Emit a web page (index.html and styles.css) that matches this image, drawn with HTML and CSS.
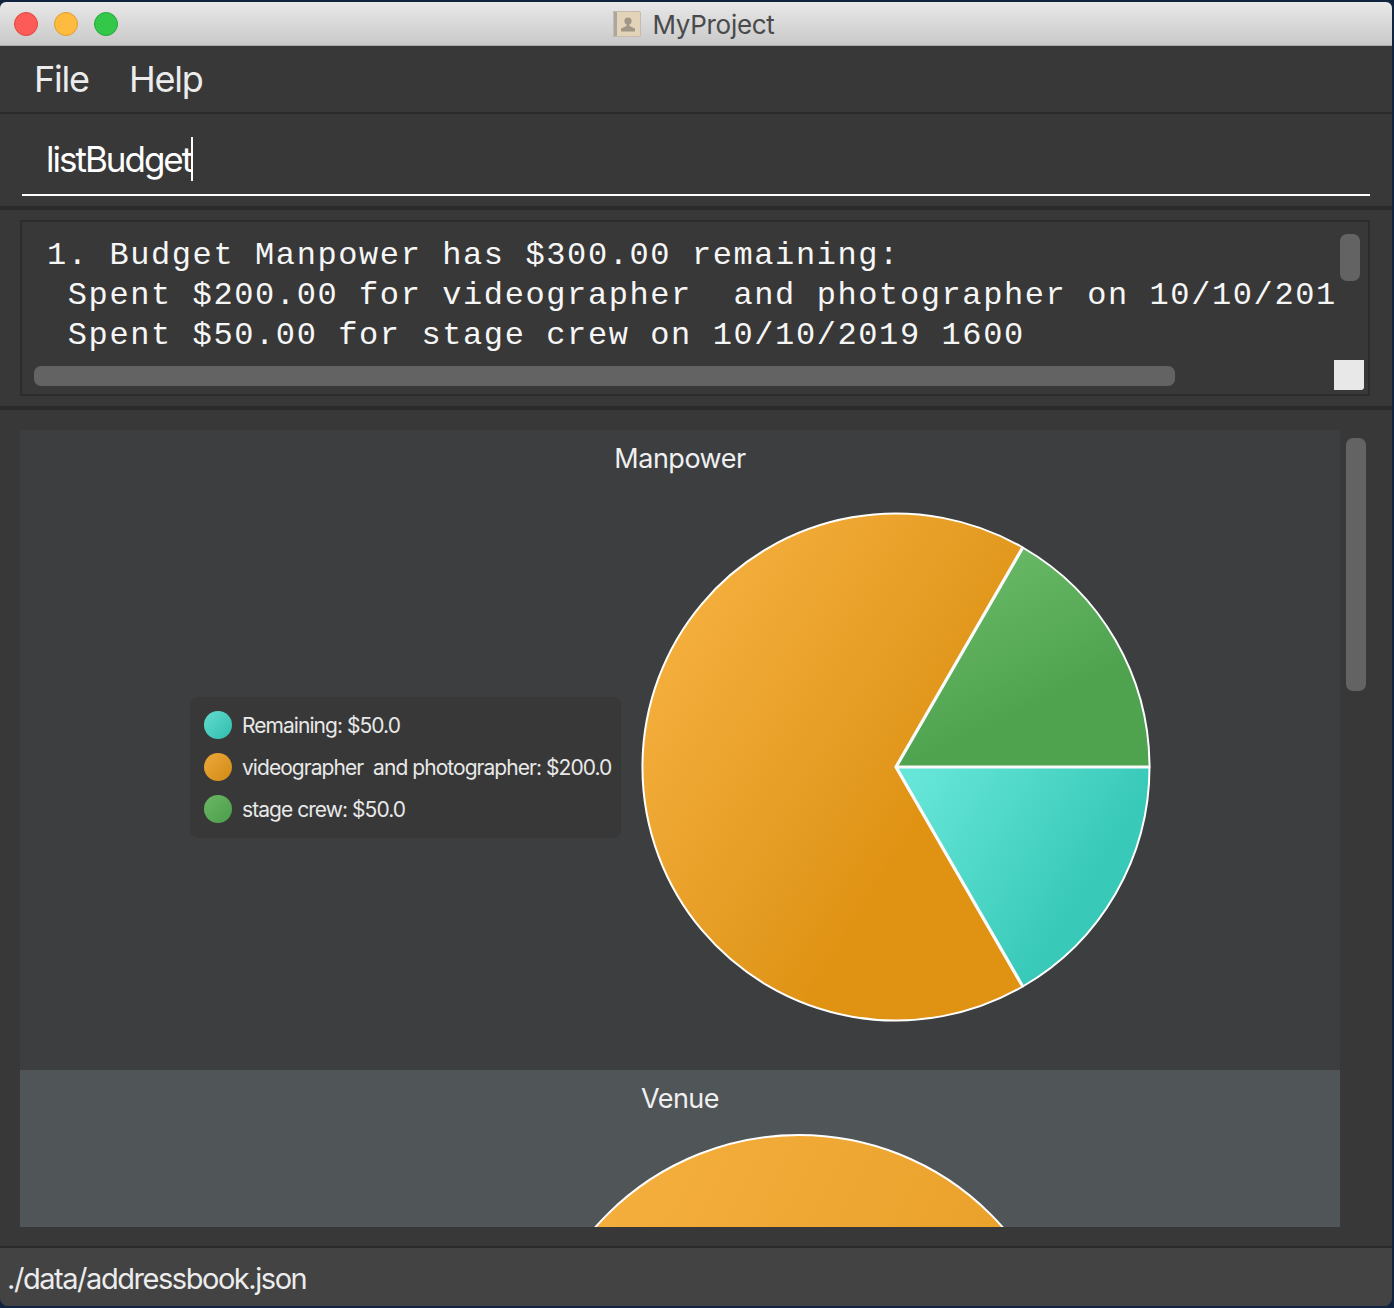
FILE: index.html
```html
<!DOCTYPE html>
<html>
<head>
  <title>MyProject</title>
  <link rel="stylesheet" href="styles.css">
</head>
<body>
  <div class="window">
    <div class="titlebar">
      <div class="lights">
        <span class="light red"></span>
        <span class="light yellow"></span>
        <span class="light green"></span>
      </div>
      <div class="title">
        <svg class="title-icon" width="28" height="26" viewBox="0 0 28 26">
          <rect x="0" y="0" width="28" height="26" rx="1.5" fill="#e3d3b8"/>
          <rect x="0" y="0" width="4" height="26" rx="1" fill="#aaa6a0"/>
          <rect x="0.5" y="0.5" width="27" height="25" rx="1.5" fill="none" stroke="#c4bcae"/>
          <circle cx="15" cy="10" r="3.6" fill="#a09786"/>
          <path d="M13.5 13 L16.5 13 L16.5 15 L22 17.5 L22 20.5 L8 20.5 L8 17.5 L13.5 15 Z" fill="#a09786"/>
        </svg>
        <span>MyProject</span>
      </div>
    </div>

    <div class="menubar">
      <span class="menu-item">File</span>
      <span class="menu-item">Help</span>
    </div>

    <div class="command">
      <div class="command-input"><span class="command-text">listBudget</span><span class="caret"></span></div>
    </div>

    <div class="result">
      <div class="result-box">
        <div class="result-text">
          <div class="result-line">1. Budget Manpower has $300.00 remaining:</div>
          <div class="result-line"> Spent $200.00 for videographer  and photographer on 10/10/2019 1600</div>
          <div class="result-line"> Spent $50.00 for stage crew on 10/10/2019 1600</div>
        </div>
        <div class="result-vbar"></div>
        <div class="result-hbar"></div>
        <div class="result-corner"></div>
      </div>
    </div>

    <div class="charts">
      <div class="chart-list">
        <div class="chart">
          <div class="chart-title">Manpower</div>
          <div class="chart-body">
            <div class="legend">
              <div class="legend-item"><span class="dot dot-teal"></span><span class="legend-label">Remaining: $50.0</span></div>
              <div class="legend-item"><span class="dot dot-orange"></span><span class="legend-label">videographer  and photographer: $200.0</span></div>
              <div class="legend-item"><span class="dot dot-green"></span><span class="legend-label">stage crew: $50.0</span></div>
            </div>
            <svg class="pie" width="512" height="512" viewBox="-256 -256 512 512">
              <defs>
                <linearGradient id="orange" gradientUnits="userSpaceOnUse" x1="-216" y1="-167" x2="60" y2="5">
                  <stop offset="0" stop-color="#f5af3e"/>
                  <stop offset="0.75" stop-color="#e39a20"/>
                  <stop offset="1" stop-color="#e09212"/>
                </linearGradient>
                <linearGradient id="orange-venue" gradientUnits="userSpaceOnUse" x1="-230" y1="-178" x2="300" y2="100">
                  <stop offset="0" stop-color="#f5af3e"/>
                  <stop offset="1" stop-color="#e39a20"/>
                </linearGradient>
                <linearGradient id="green" gradientUnits="userSpaceOnUse" x1="110" y1="-215" x2="175" y2="-80">
                  <stop offset="0" stop-color="#68b866"/>
                  <stop offset="1" stop-color="#4fa34f"/>
                </linearGradient>
                <linearGradient id="teal" gradientUnits="userSpaceOnUse" x1="14" y1="13" x2="190" y2="125">
                  <stop offset="0" stop-color="#66e6d8"/>
                  <stop offset="1" stop-color="#38c9b8"/>
                </linearGradient>
              </defs>
              <path class="slice" d="M0 0 L126.75 -219.5 A253.5 253.5 0 1 0 126.75 219.5 Z" fill="url(#orange)"/>
              <path class="slice" d="M0 0 L253.5 0 A253.5 253.5 0 0 0 126.75 -219.5 Z" fill="url(#green)"/>
              <path class="slice" d="M0 0 L126.75 219.5 A253.5 253.5 0 0 0 253.5 0 Z" fill="url(#teal)"/>
              <path class="spoke" d="M126.75 -219.5 L0 0 L126.75 219.5 M0 0 L253.5 0"/>
            </svg>
          </div>
        </div>
        <div class="chart chart-selected">
          <div class="chart-title">Venue</div>
          <svg class="pie-venue" width="544" height="544" viewBox="-272 -272 544 544">
            <circle class="slice" r="271" fill="url(#orange-venue)"/>
          </svg>
        </div>
      </div>
      <div class="charts-vbar"></div>
    </div>

    <div class="status">./data/addressbook.json</div>
  </div>
</body>
</html>
```

FILE: styles.css
```css
* {
  box-sizing: border-box;
}

html, body {
  margin: 0;
  height: 1308px;
  overflow: hidden;
}

body {
  background-color: #10233f;
  padding: 2px 2px 2px 0;
  font-family: Inter, "Liberation Sans", sans-serif;
  color: #f0f0f0;
}

.window {
  height: 1304px;
  display: flex;
  flex-direction: column;
  background-color: #383838;
  border-radius: 6px 6px 8px 8px;
  overflow: hidden;
}

.titlebar {
  height: 44px;
  flex: none;
  position: relative;
  display: flex;
  align-items: center;
  justify-content: center;
  background: linear-gradient(to bottom, #e8e8e8, #c9c9c9);
  border-bottom: 1px solid #a9a9a9;
}

.lights {
  position: absolute;
  left: 14px;
  top: 10px;
  display: flex;
  gap: 16px;
}

.light {
  width: 24px;
  height: 24px;
  border-radius: 50%;
}

.red {
  background-color: #fc5b57;
  border: 1px solid #e2463f;
}

.yellow {
  background-color: #fdbc40;
  border: 1px solid #e09e2a;
}

.green {
  background-color: #34c84a;
  border: 1px solid #25a83a;
}

.title {
  display: flex;
  align-items: center;
  gap: 11px;
  margin-left: -4px;
  padding-top: 1px;
  font-size: 26px;
  color: #4a4a4a;
  letter-spacing: -0.3px;
}

.menubar {
  height: 68px;
  flex: none;
  display: flex;
  align-items: center;
  gap: 40px;
  padding-left: 34px;
  border-bottom: 2px solid #2a2a2a;
  font-size: 36px;
  letter-spacing: -1.2px;
  color: #ececec;
}

.command {
  height: 96px;
  flex: none;
  padding: 0 22px;
  border-bottom: 4px solid #2a2a2a;
}

.command-input {
  height: 82px;
  display: flex;
  align-items: center;
  padding: 10px 0 0 24px;
  border-bottom: 2px solid #fff;
  font-size: 35px;
  letter-spacing: -2px;
  color: #fff;
}

.caret {
  width: 2px;
  height: 44px;
  background-color: #fff;
}

.result {
  height: 200px;
  flex: none;
  padding: 10px 22px 10px 20px;
  border-bottom: 4px solid #2a2a2a;
}

.result-box {
  position: relative;
  height: 176px;
  border: 2px solid #2c2c2c;
  padding: 14px 0 0 25px;
}

.result-text {
  width: 1288px;
  overflow: hidden;
  font-family: "Liberation Mono", monospace;
  font-size: 32px;
  letter-spacing: 1.6px;
  line-height: 40px;
  color: #f6f6f6;
}

.result-line {
  white-space: pre;
}

.result-vbar {
  position: absolute;
  left: 1318px;
  top: 12px;
  width: 20px;
  height: 47px;
  border-radius: 7px;
  background-color: #636363;
}

.result-hbar {
  position: absolute;
  left: 12px;
  top: 144px;
  width: 1141px;
  height: 20px;
  border-radius: 7px;
  background-color: #636363;
}

.result-corner {
  position: absolute;
  left: 1312px;
  top: 138px;
  width: 30px;
  height: 30px;
  border-radius: 0 0 3px 0;
  background-color: #e8e8e8;
}

.charts {
  flex: 1;
  position: relative;
  padding: 20px 0 19px 20px;
  border-bottom: 2px solid #2a2a2a;
}

.chart-list {
  width: 1320px;
  height: 797px;
  overflow: hidden;
}

.chart {
  height: 640px;
  background-color: #3c3e40;
}

.chart-selected {
  height: 157px;
  overflow: hidden;
  background-color: #505558;
}

.chart-title {
  padding-top: 12px;
  height: 56px;
  text-align: center;
  font-size: 27px;
  letter-spacing: -0.5px;
  color: #f0f0f0;
}

.chart-body {
  display: flex;
  align-items: center;
  padding: 25px 0 0 170px;
  gap: 19px;
}

.legend {
  width: 431px;
  height: 141px;
  flex: none;
  display: flex;
  flex-direction: column;
  gap: 14px;
  padding: 14px 0 0 14px;
  border-radius: 8px;
  background-color: #383838;
  font-size: 21px;
  letter-spacing: -0.95px;
  color: #e8e8e8;
  white-space: pre;
}

.legend-item {
  display: flex;
  align-items: center;
  gap: 10px;
  height: 28px;
}

.legend-label {
  padding-top: 2px;
}

.dot {
  width: 28px;
  height: 28px;
  border-radius: 50%;
}

.dot-teal {
  background: linear-gradient(to bottom right, #64dccf, #2fbdae);
}

.dot-orange {
  background: linear-gradient(to bottom right, #efa93d, #cf8a14);
}

.dot-green {
  background: linear-gradient(to bottom right, #6bb765, #4a9e4b);
}

.slice {
  stroke: #fff;
  stroke-width: 2;
  stroke-linejoin: round;
}

.spoke {
  fill: none;
  stroke: #fafafa;
  stroke-width: 3.2;
}

.pie {
  flex: none;
}

.pie-venue {
  display: block;
  margin: 8px 0 0 507px;
}

.charts-vbar {
  position: absolute;
  left: 1346px;
  top: 28px;
  width: 20px;
  height: 253px;
  border-radius: 7px;
  background-color: #636363;
}

.status {
  height: 58px;
  flex: none;
  display: flex;
  align-items: center;
  padding: 2px 0 0 7px;
  background-color: #434343;
  font-size: 29px;
  letter-spacing: -1.45px;
  color: #ececec;
}
```
